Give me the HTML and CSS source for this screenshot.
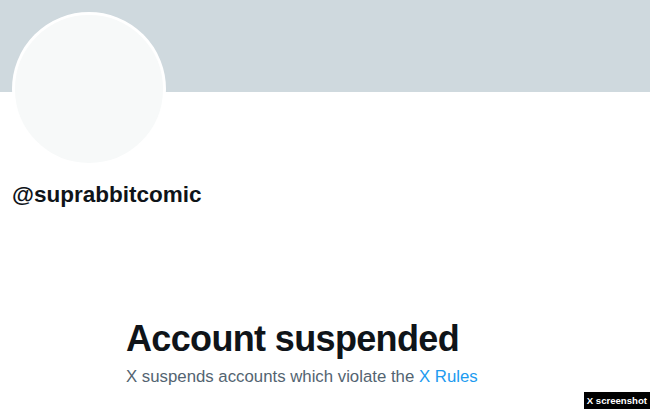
FILE: index.html
```html
<!DOCTYPE html>
<html lang="en">
<head>
    <meta charset="UTF-8">
    <meta name="viewport" content="width=device-width, initial-scale=1.0">
    <title>@suprabbitcomic / X</title>
    <link rel="stylesheet" href="styles.css">
</head>
<body>
    <div class="banner"></div>
    <div class="profile">
        <div class="avatar"></div>
        <div class="handle">@suprabbitcomic</div>
    </div>
    <div class="notice">
        <h1>Account suspended</h1>
        <p>X suspends accounts which violate the <a href="#">X Rules</a></p>
    </div>
    <div class="credit">X screenshot</div>
</body>
</html>
```

FILE: styles.css
```css
body {
    margin: 0;
    padding: 0;
    background: #fff;
    font-family: "Liberation Sans", Arial, sans-serif;
    color: #0f1419;
    height: 409px;
    position: relative;
    overflow: hidden;
}
.banner {
    height: 92px;
    background: #cfd9de;
}
.profile {
    padding: 0 12px;
}
.avatar {
    width: 148px;
    height: 148px;
    margin-top: -80px;
    border: 3px solid #fff;
    border-radius: 50%;
    background: #f7f9f9;
}
.handle {
    margin-top: 16px;
    font-size: 22.5px;
    line-height: 26px;
    font-weight: bold;
}
.notice {
    margin-top: 111px;
    padding-left: 126px;
}
h1 {
    margin: 0;
    font-size: 36px;
    line-height: 40px;
    font-weight: bold;
    letter-spacing: -0.65px;
}
p {
    margin: 8px 0 0;
    font-size: 16.8px;
    line-height: 20px;
    color: #536471;
}
p a {
    color: #1d9bf0;
    text-decoration: none;
}
.credit {
    position: absolute;
    right: 0;
    bottom: 0;
    background: #000;
    color: #fff;
    font-size: 9.6px;
    font-weight: bold;
    line-height: 17px;
    padding: 0 3px;
}
```
